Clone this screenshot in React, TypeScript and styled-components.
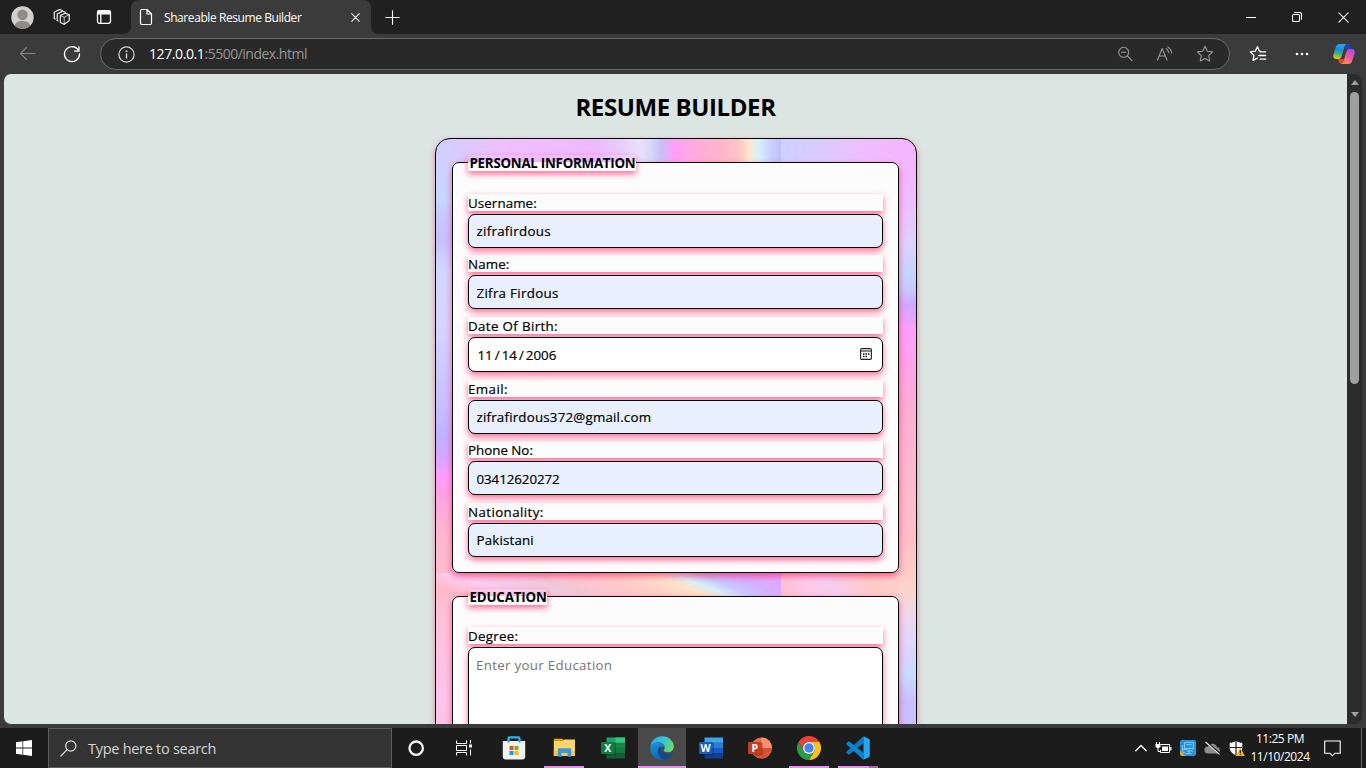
import React from "react";
import styled, { createGlobalStyle, css } from "styled-components";

const GlobalStyle = createGlobalStyle`
  * { box-sizing: border-box; }
  body { margin: 0; overflow: hidden; background: #3b3b3b; }
  svg { display: block; flex: none; }
`;

const ui = `"Open Sans", "Noto Sans", sans-serif`;
const formFont = `"Open Sans", "Noto Sans", sans-serif`;

const Screen = styled.div`
  width: 1366px;
  height: 768px;
  display: flex;
  flex-direction: column;
  overflow: hidden;
  background: #3b3b3b;
  font-family: ${ui};
`;

/* ---------- browser chrome ---------- */

const TabBar = styled.header`
  height: 34px;
  flex: none;
  display: flex;
  background: #202020;
`;

const TabTools = styled.div`
  width: 131px;
  display: flex;
  align-items: center;
  padding-left: 10.5px;
  gap: 19.5px;
  svg:last-child {
    margin-left: 5px;
  }
`;

const Tab = styled.div`
  width: 240px;
  height: 34px;
  background: #3b3b3b;
  border-radius: 8px 8px 0 0;
  display: flex;
  align-items: center;
  padding: 0 11px 0 8px;
  color: #fff;
`;

const TabFoot = styled.div<{ $side: "left" | "right" }>`
  width: 7px;
  height: 7px;
  align-self: flex-end;
  background: radial-gradient(
    circle at ${(p) => (p.$side === "left" ? "0 0" : "100% 0")},
    #202020 6.5px,
    #3b3b3b 7.2px
  );
  ${(p) => (p.$side === "left" ? "margin-left: -7px;" : "")}
`;

const TabTitle = styled.span`
  flex: 1;
  margin-left: 11px;
  font-size: 12px;
  letter-spacing: -0.42px;
  white-space: nowrap;
`;

const NewTab = styled.div`
  display: flex;
  align-items: center;
  padding-left: 7px;
`;

const WindowButtons = styled.div`
  margin-left: auto;
  display: flex;
`;

const WindowButton = styled.div`
  width: 46px;
  height: 34px;
  display: flex;
  align-items: center;
  justify-content: center;
`;

const Toolbar = styled.nav`
  height: 40px;
  flex: none;
  display: flex;
  align-items: center;
  background: #3b3b3b;
`;

const NavButtons = styled.div`
  width: 100px;
  display: flex;
  align-items: center;
  padding-left: 19px;
  gap: 27px;
`;

const AddressBar = styled.div`
  width: 1130px;
  height: 32px;
  border: 1px solid #696969;
  border-radius: 16px;
  background: #292929;
  display: flex;
  align-items: center;
  padding: 0 15px 0 16.5px;
`;

const Url = styled.span`
  flex: 1;
  margin-left: 14.5px;
  margin-top: -1px;
  font-size: 14px;
  letter-spacing: -0.5px;
  color: #969696;
  b {
    font-weight: 400;
    letter-spacing: -0.4px;
    color: #fff;
  }
`;

const AddressActions = styled.div`
  display: flex;
  align-items: center;
  gap: 23px;
`;

const ToolbarActions = styled.div`
  flex: 1;
  display: flex;
  align-items: center;
  padding-left: 19px;
  gap: 27px;
  svg:last-child {
    margin-left: -4px;
  }
`;

/* ---------- page ---------- */

const Viewport = styled.main`
  height: 650px;
  margin: 0 4px 4px;
  flex: none;
  display: flex;
  border-radius: 7px;
  overflow: hidden;
`;

const Page = styled.div`
  width: 1343px;
  background: #dbe5e1;
  display: flex;
  flex-direction: column;
  align-items: center;
  overflow: hidden;
`;

const Title = styled.h1`
  margin: 15px 0;
  height: 34px;
  line-height: 35px;
  font-family: ${ui};
  font-size: 24px;
  font-weight: 700;
  letter-spacing: -0.4px;
  color: #000;
`;

const glow = "0 3px 6px rgba(255, 10, 85, 0.6)";

const Form = styled.form`
  width: 482px;
  height: 700px;
  flex: none;
  padding: 15.5px 16px 16px;
  border: 1px solid #000;
  border-radius: 15px;
  box-shadow: 0 3px 6px rgba(230, 50, 120, 0.5);
  background:
    linear-gradient(90deg, #d0d0ff 0, #ddc8fc 34px, #f0bfff 66px, #eebafe 160px, #e8cdf8 184px,
      #eae0fd 205px, #d4daf8 214px, #c8c0f5 225px, #ff9ff8 238px, #ffaae0 256px, #ffb4cc 284px,
      #ffc4c4 302px, #ffe6cc 313px, #d5f0fc 323px, #c8d0ff 335px, #c0c0fc 345px, #cdd0ff 345px,
      #d8ccfc 384px, #f0bdff 430px, #f3b5ff 480px) 0 0 / 480px 24px no-repeat,
    linear-gradient(22deg, #ffb8cc 7%, #ffc4dc 12%, #fbcdf0 18%, #f0c8d8 38%, #ffc6cc 48%,
      #ffd0c8 59%, #ffe2c6 67%, #d8f0f4 73%, #c8c8ff 79%, #d4b0ff 86%, #dfa8ff 93%)
      0 434px / 345px 24px no-repeat,
    linear-gradient(60deg, #fcbccc 0, #ffc8e8 22%, #f4cdf0 42%, #ffcac8 75%, #fdd0cc 100%)
      345px 434px / 118px 24px no-repeat,
    linear-gradient(180deg, #cfd0ff 24px, #c4d8ff 61px, #c8c8ff 76px, #c8bfff 101px, #d0d8ff 131px,
      #d4d4ff 191px, #c8c0ff 261px, #c0b0ff 301px, #d8a6ff 321px, #ff9dff 337px, #ffa0e8 352px,
      #ffb5d0 391px, #ffbccf 431px, #ffc0d8 481px, #fbc4ec 561px, #fcc4e4 586px) 0 0 / 240px 100% no-repeat,
    linear-gradient(180deg, #f3b5ff 24px, #ecc0ff 71px, #e0d0ff 101px, #c4d4ff 136px, #c8c8ff 151px,
      #d0a8ff 166px, #ff9ffc 191px, #ffa6e0 241px, #ffb0d0 281px, #ffb8d0 341px, #ffbfc8 401px,
      #ffccc8 431px, #fbd4cc 451px, #ecd8f0 481px, #dcd4ff 511px, #c8dcff 536px, #c8c0ff 561px,
      #ccc0ff 586px) 240px 0 / 240px 100% no-repeat;
`;

const Group = styled.fieldset<{ $top: number }>`
  width: 447px;
  margin: 0 0 15.5px;
  padding: ${(p) => p.$top}px 15px 15px;
  border: 1px solid #000;
  border-radius: 7px;
  background: #fcfcfc;
  box-shadow: ${glow};
  display: block;
  min-width: 0;
`;

const Legend = styled.legend<{ $width: number; $spacing: number }>`
  width: ${(p) => p.$width}px;
  height: 16px;
  padding: 0 2px;
  line-height: 17px;
  font-family: ${formFont};
  font-size: 13.33px;
  font-weight: 700;
  letter-spacing: ${(p) => p.$spacing}px;
  white-space: nowrap;
  color: #000;
  box-shadow: ${glow};
`;

const Label = styled.label<{ $spacing: number }>`
  display: block;
  height: 17px;
  margin-bottom: 3px;
  padding-left: 0.5px;
  line-height: 19px;
  font-family: ${formFont};
  font-size: 13.33px;
  letter-spacing: ${(p) => p.$spacing}px;
  -webkit-text-stroke: 0.2px #000;
  color: #000;
  box-shadow: ${glow};
`;

const control = css`
  width: 415px;
  border: 1px solid #000;
  border-radius: 7px;
  font-family: ${formFont};
  font-size: 13.33px;
  color: #000;
  box-shadow: ${glow};
`;

const Input = styled.input<{ $gap: number; $spacing: number; $drop: number }>`
  ${control}
  display: block;
  height: 34px;
  margin: 0 0 ${(p) => p.$gap}px;
  padding: ${(p) => 1 + p.$drop}px 7.5px 1px 8px;
  letter-spacing: ${(p) => p.$spacing}px;
  -webkit-text-stroke: 0.2px #000;
  background: #e8f0fe;
  outline: none;
`;

const DateField = styled.div`
  ${control}
  height: 35px;
  margin-bottom: 8px;
  padding: 1px 10px 1px 9px;
  display: flex;
  align-items: center;
  -webkit-text-stroke: 0.2px #000;
  background: #fff;
  svg {
    margin: -1px 0 0 auto;
  }
  i {
    font-style: normal;
    padding: 0 2px 0 2px;
  }
`;

const TextArea = styled.textarea`
  ${control}
  display: block;
  height: 87px;
  padding: 8px 7.5px;
  line-height: 18px;
  letter-spacing: 0.3px;
  background: #fff;
  outline: none;
  resize: vertical;
  &::placeholder {
    color: #757575;
  }
`;

const Scrollbar = styled.div`
  width: 15px;
  background: #2c2c2c;
  display: flex;
  flex-direction: column;
  align-items: center;
`;

const Thumb = styled.div`
  width: 9px;
  height: 292px;
  margin: 7px 0 auto;
  border-radius: 5px;
  background: #9f9f9f;
`;

const Arrow = styled.div<{ $down?: boolean }>`
  width: 0;
  height: 0;
  border: 4.5px solid transparent;
  ${(p) =>
    p.$down
      ? "border-top: 5px solid #9f9f9f; border-bottom: 0; margin-bottom: 7px;"
      : "border-bottom: 5px solid #9f9f9f; border-top: 0; margin-top: 6px;"}
`;

/* ---------- taskbar ---------- */

const Taskbar = styled.footer`
  height: 40px;
  flex: none;
  display: flex;
  background: #1c1c1c;
  color: #fff;
`;

const StartButton = styled.div`
  width: 48px;
  display: flex;
  align-items: center;
  justify-content: center;
`;

const SearchBox = styled.div`
  width: 344px;
  height: 40px;
  border: 1px solid #5e5e5e;
  background: #333;
  display: flex;
  align-items: center;
  padding-left: 11px;
  gap: 11px;
  font-size: 14.5px;
  letter-spacing: -0.28px;
  color: #d6d6d6;
`;

const AppButton = styled.div<{ $active?: boolean; $gap?: number }>`
  width: 48px;
  height: 40px;
  margin-left: ${(p) => p.$gap ?? 1}px;
  display: flex;
  flex-direction: column;
  align-items: center;
  justify-content: center;
  background: ${(p) => (p.$active ? "#4a4a4a" : "transparent")};
  position: relative;
`;

const Running = styled.span<{ $full?: boolean; $stacked?: boolean }>`
  position: absolute;
  bottom: 0;
  left: ${(p) => (p.$full ? 0 : 4)}px;
  right: ${(p) => (p.$full ? 0 : 4)}px;
  height: 2px;
  background: ${(p) =>
    p.$stacked ? "linear-gradient(90deg, #e88bf6 31px, #a766b0 31px)" : "#e88bf6"};
`;

const Tray = styled.div`
  margin-left: auto;
  display: flex;
  align-items: center;
  height: 40px;
`;

const TrayIcons = styled.div`
  display: flex;
  align-items: center;
  gap: 8px;
  margin-right: 5px;
`;

const Clock = styled.div`
  width: 60px;
  margin-right: 14px;
  font-size: 12px;
  line-height: 18px;
  letter-spacing: -0.45px;
  text-align: center;
  white-space: nowrap;
`;

const ShowDesktop = styled.div`
  width: 5px;
  height: 40px;
  margin-left: 20px;
  border-left: 1px solid #6a6a6a;
`;

/* ---------- icons ---------- */

const line = { fill: "none", stroke: "#fff", strokeWidth: 1.1, strokeLinecap: "round", strokeLinejoin: "round" } as const;

const Avatar = () => (
  <svg width="23" height="23" viewBox="0 0 23 23">
    <defs><clipPath id="face"><circle cx="11.5" cy="11.5" r="11.2" /></clipPath></defs>
    <g clipPath="url(#face)">
      <rect width="23" height="23" fill="#d2d0ce" />
      <circle cx="11.5" cy="8.7" r="5.2" fill="#8f8b88" />
      <ellipse cx="11.5" cy="20" rx="7.7" ry="5.2" fill="#8f8b88" />
    </g>
  </svg>
);

const Workspaces = () => (
  <svg width="18" height="18" viewBox="0 0 18 18" {...line}>
    <path d="M7.300 7.600L12.200 5.200l4 1.500v6.100L11.200 16.300l-3.900-1.800z" />
    <path d="M7.300 7.600l3.900 1.700 5-2.600M11.200 9.300v7" strokeWidth=".7" />
    <path d="M5 13l-.8-.4V6L9.500 3.300l3 1" />
    <path d="M2.200 11l-1-.4V4.300L6.500 1.500l3 1" />
  </svg>
);

const TabActions = () => (
  <svg width="16" height="16" viewBox="0 0 16 16" {...line} strokeWidth={1.3}>
    <rect x="1.500" y="1.700" width="13" height="12.600" rx="2" />
    <path d="M2 2.200h12v2.600H2z" fill="#fff" /><path d="M4.800 5v9" />
  </svg>
);

const Doc = () => (
  <svg width="14" height="18" viewBox="0 0 14 18" {...line} strokeWidth={1.2}>
    <path d="M2.500 1.500h5.500l4.500 4.500v9a1.500 1.500 0 0 1-1.500 1.500H2.500A1.500 1.500 0 0 1 1.500 15V3a1.500 1.500 0 0 1 1-1.500zM8 1.500V6h4.500" />
  </svg>
);

const Cross = ({ size, weight = 1.2 }: { size: number; weight?: number }) => (
  <svg width={size} height={size} viewBox="0 0 10 10" {...line} strokeWidth={weight}>
    <path d="M.8.8l8.400 8.400M9.200.8L.8 9.200" />
  </svg>
);

const Plus = () => (
  <svg width="15" height="15" viewBox="0 0 15 15" {...line}><path d="M7.500.8v13.400M.8 7.500h13.400" /></svg>
);

const Minimize = () => <svg width="10" height="10" viewBox="0 0 10 10"><path d="M0 5.500h10" stroke="#fff" /></svg>;

const Restore = () => (
  <svg width="10" height="10" viewBox="0 0 10 10" {...line}>
    <rect x=".5" y="2.500" width="7" height="7" rx="1.200" />
    <path d="M2.700.5h5A1.800 1.800 0 0 1 9.500 2.300v5" />
  </svg>
);

const Back = () => (
  <svg width="17" height="16" viewBox="0 0 17 16" {...line} stroke="#858585"><path d="M16 7.500H1.500M7.500 1.500L1.500 7.500l6 6" /></svg>
);

const Refresh = () => (
  <svg width="18" height="18" viewBox="0 0 18 18" {...line} strokeWidth={1.300}>
    <path d="M15.800 6A7.500 7.500 0 1 0 16.500 9M16 1.800V6.200H11.600" />
  </svg>
);

const Info = () => (
  <svg width="17" height="17" viewBox="0 0 17 17" {...line} stroke="#d8d8d8" strokeWidth={1.200}>
    <circle cx="8.500" cy="8.500" r="7.600" /><path d="M8.500 8v4" strokeWidth="1.400" /><circle cx="8.500" cy="5.300" r=".4" />
  </svg>
);

const ZoomOut = () => (
  <svg width="16" height="16" viewBox="0 0 16 16" {...line} stroke="#9a9a9a">
    <circle cx="6.700" cy="6.300" r="5" /><path d="M10.500 10l4.500 4.700M4.500 6.300h4.500" />
  </svg>
);

const ReadAloud = () => (
  <svg width="17" height="16" viewBox="0 0 17 16" {...line} stroke="#9a9a9a">
    <path d="M1.500 14L6.200 2.500 11 14M3.200 10h6.100" />
    <path d="M10.300 2.600a5 5 0 0 1 2.200 3.900M11.800.9a8 8 0 0 1 3.800 6" />
  </svg>
);

const starPath = "M9 1.300l2.300 4.900 5.300.7-3.900 3.700 1 5.400L9 13.400 4.300 16l1-5.400L1.400 6.900l5.300-.7z";
const Star = () => (
  <svg width="18" height="18" viewBox="0 0 18 18" {...line} stroke="#9a9a9a"><path d={starPath} /></svg>
);

const Favorites = () => (
  <svg width="18" height="18" viewBox="0 0 18 18" {...line} strokeWidth={1.300}>
    <path d="M11.700 6.300l-1.400-.2L8.500 1.700 6.200 6.200l-4.900.7 3.600 3.500-.8 5 4.200-2.300M11.200 6.800h5.500M9.800 10.500h6.900M11.200 14.200h5.500" />
  </svg>
);

const Dots = () => (
  <svg width="16" height="16" viewBox="0 0 16 16" fill="#fff">
    <circle cx="3" cy="8" r="1.300" /><circle cx="8" cy="8" r="1.300" /><circle cx="13" cy="8" r="1.300" />
  </svg>
);

const Copilot = () => (
  <svg width="22" height="22" viewBox="0 0 22 22">
    <defs>
      <linearGradient id="cpA" x1=".5" y1="0" x2=".3" y2="1">
        <stop offset="0" stopColor="#1ea8f5" /><stop offset=".4" stopColor="#1b8edb" />
        <stop offset=".72" stopColor="#59b95b" /><stop offset="1" stopColor="#f5c50a" />
      </linearGradient>
      <linearGradient id="cpB" x1=".7" y1="0" x2=".3" y2="1">
        <stop offset="0" stopColor="#a74cf0" /><stop offset=".5" stopColor="#f0569b" /><stop offset="1" stopColor="#ff8b58" />
      </linearGradient>
    </defs>
    <path d="M12 1h3c1.500 0 2 1.300 2.400 2.600L18.300 6H13z" fill="#1746c8" />
    <path d="M5 16h6l-1 4.800H8.500C6.500 20.800 6 19.500 5 16z" fill="#e9452e" />
    <path d="M6.500 1H14c-1.500 0-2.300 1.600-2.800 3.400L8.900 12.500C8.300 14.700 7.600 16 5.600 16H3.200C.6 16-.1 14 .5 11.500L2.800 4C3.400 2 4.500 1 6.500 1z" fill="url(#cpA)" />
    <path d="M15.500 21H8c1.500 0 2.300-1.600 2.800-3.400l2.300-8.100C13.700 7.300 14.400 6 16.400 6h2.400c2.600 0 3.300 2 2.700 4.500L19.200 18c-.6 2-1.700 3-3.700 3z" fill="url(#cpB)" />
  </svg>
);

const Calendar = () => (
  <svg width="12" height="12" viewBox="0 0 12 12">
    <rect x=".6" y=".6" width="10.800" height="10.800" rx="1.200" fill="none" stroke="#222" strokeWidth="1.100" />
    <path d="M1 3h10" stroke="#555" strokeWidth="1.400" />
    <path d="M3 6h1.500M5.500 6H7M8 6h1.500M3 8.500h1.500M5.500 8.500H7" stroke="#111" strokeWidth="1.300" />
  </svg>
);

const WindowsLogo = () => (
  <svg width="16" height="16" viewBox="0 0 16 16" fill="#fff">
    <path d="M0 2.200l6.500-.9v6.300H0zM7.200 1.200L16 0v7.600H7.200zM0 8.400h6.500v6.300L0 13.800zM7.200 8.400H16V16l-8.800-1.200z" />
  </svg>
);

const SearchGlyph = () => (
  <svg width="17" height="17" viewBox="0 0 17 17" {...line} stroke="#e0e0e0" strokeWidth={1.200}>
    <circle cx="10.800" cy="6" r="5.100" /><path d="M7.100 9.700L.9 16" />
  </svg>
);

const Cortana = () => (
  <svg width="17" height="17" viewBox="0 0 17 17"><circle cx="8.200" cy="8.200" r="6.700" fill="none" stroke="#f5f5f5" strokeWidth="2.300" /></svg>
);

const TaskView = () => (
  <svg width="16" height="16" viewBox="0 0 16 16" fill="none" stroke="#fff">
    <path d="M.5.5V3.500h10V.5M.5 15.500V12.500h10v3M.5 5.500h10v5H.5zM14.500 0v3.500M14.500 9.500V15.500" />
    <path d="M13 4.500h3v3h-3z" fill="#fff" stroke="none" />
  </svg>
);

const Store = () => (
  <svg width="24" height="24" viewBox="0 0 24 24">
    <path d="M6.500 6V2.500c0-.8.500-1.200 1.200-1.200h8.600c.7 0 1.200.4 1.200 1.200V6" fill="none" stroke="#35b5ee" strokeWidth="2.200" />
    <path d="M.8 5h22.400v15.500a3 3 0 0 1-3 3H3.800a3 3 0 0 1-3-3z" fill="#f1f1f1" />
    <path d="M6.500 3.500v3M17.500 3.500v3" stroke="#2a9fd6" strokeWidth="2" />
    <path d="M7.500 10h4v4h-4z" fill="#f25022" /><path d="M12.500 10h4v4h-4z" fill="#7fba00" />
    <path d="M7.500 15h4v4h-4z" fill="#00a4ef" /><path d="M12.500 15h4v4h-4z" fill="#ffb900" />
  </svg>
);

const Explorer = () => (
  <svg width="23" height="20" viewBox="0 0 23 20">
    <path d="M.8 2c0-.8.500-1.300 1.200-1.300h7.500l2 2H.8z" fill="#e9a50c" />
    <path d="M.8 2.800H10l1.500-1.300H22V18H.8z" fill="#ffd666" /><path d="M.8 13H22v5H.8z" fill="#f6c84d" />
    <path d="M4.800 18.800v-7.300c0-.8.500-1.200 1.200-1.200h11c.8 0 1.200.4 1.200 1.200v7.300h-3.700v-3.800H8.500v3.800z" fill="#3e97dc" />
  </svg>
);

type OfficeProps = { letter: string; tone: string; shades: string[]; round?: boolean };
const OfficeText = styled.text`
  font: 700 10.500px ${ui};
  fill: #fff;
  text-anchor: middle;
`;
const Office = ({ letter, tone, shades, round }: OfficeProps) => (
  <svg width="24" height="22" viewBox="0 0 24 22">
    {round ? (
      <>
        <circle cx="13.500" cy="11" r="10.500" fill={shades[0]} />
        <path d="M13.500.5A10.500 10.500 0 0 1 24 11H13.500z" fill={shades[1]} />
        <path d="M3 11h21a10.500 10.500 0 0 1-21 0z" fill={shades[2]} />
      </>
    ) : (
      <>
        {shades.slice(0, 4).map((c, i) => (
          <rect key={c} x="5.500" y={0.5 + i * 5.2} width="18.500" height="5.400" fill={c} />
        ))}
        {shades[4] && <path d="M14.500.5H24v5.200h-9.500z" fill={shades[4]} />}
      </>
    )}
    <rect x="6" y="6" width="9" height="12.500" fill="#000" opacity=".2" />
    <rect x="0" y="5" width="13.500" height="12" rx="1" fill={tone} />
    <OfficeText x="6.700" y="14.800">{letter}</OfficeText>
  </svg>
);

const Edge = () => (
  <svg width="24" height="24" viewBox="0 0 24 24">
    <defs>
      <linearGradient id="edA" x1="0" y1=".4" x2="1" y2=".6">
        <stop offset="0" stopColor="#2aaee6" /><stop offset=".5" stopColor="#35c3d8" /><stop offset="1" stopColor="#6be05c" />
      </linearGradient>
      <linearGradient id="edB" x1="0" y1="0" x2=".5" y2="1">
        <stop offset="0" stopColor="#1898dc" /><stop offset="1" stopColor="#0b64b8" />
      </linearGradient>
    </defs>
    <path d="M.4 10C1.500 4 6.300.2 12 .2c7 0 11.800 5 11.800 10.100 0 3.900-2.800 6-5.800 6-2.700 0-4.300-.9-4.300-1.700 0-.7 1-1.200 1-3.100C14.700 8.500 12 6.500 8.500 6.500 4.500 6.500 1.500 8.500.4 10z" fill="url(#edA)" />
    <path d="M.2 12.500C.3 8.500 4 6.400 8.300 6.400c3.600 0 6 2 6.300 4.700-4-2-6.600 1-6.600 4.200 0 4.400 3.200 7.800 6.800 8.200-1 .3-1.800.4-2.800.4C5.200 23.900.2 18.800.2 12.500z" fill="url(#edB)" />
    <path d="M8 15.300c0-2.600 1.300-4.300 3-5-.8 1.400-.4 7.800 6.800 7.800 2.300 0 3.700-.6 4.700-1.200.4-.2.700.2.500.5-1.500 2.900-4.600 6-8.200 6.100-3.600-.4-6.800-3.800-6.800-8.200z" fill="#0e4a8c" />
  </svg>
);

const Chrome = () => (
  <svg width="24" height="24" viewBox="0 0 24 24">
    <path d="M1.600 6A12 12 0 0 1 22.400 6H12a6 6 0 0 0-5.200 9z" fill="#ea4335" />
    <path d="M22.400 6A12 12 0 0 1 12 24l5.200-9A6 6 0 0 0 12 6z" fill="#fbc116" />
    <path d="M12 24A12 12 0 0 1 1.600 6l5.200 9a6 6 0 0 0 10.400 0z" fill="#2a9b48" />
    <circle cx="12" cy="12" r="6" fill="#fff" /><circle cx="12" cy="12" r="4.700" fill="#4285f4" />
  </svg>
);

const VSCode = () => (
  <svg width="24" height="24" viewBox="0 0 24 24">
    <path d="M17.500.3L.6 15.600c-.5.500-.5 1 0 1.500l1.300 1.200c.4.400 1 .4 1.400.1L17.500 7.200z" fill="#0f78bf" />
    <path d="M17.500 23.700L.6 8.400c-.5-.5-.5-1 0-1.500l1.300-1.200c.4-.4 1-.4 1.400-.1l14.200 11.200z" fill="#0b85cf" />
    <path d="M17.500.2l5.300 2.500c.7.300 1 .9 1 1.500v15.600c0 .7-.3 1.200-1 1.500l-5.300 2.500z" fill="#27a5ef" />
  </svg>
);

const Chevron = () => (
  <svg width="12" height="8" viewBox="0 0 12 8" {...line} strokeWidth={1.300}><path d="M.8 6.700L6 1.500l5.200 5.200" /></svg>
);

const Battery = () => (
  <svg width="17" height="12" viewBox="0 0 17 12" fill="none" stroke="#fff">
    <path d="M5.500 2.500h9v8h-9V8" /><path d="M15.800 5v3.500" strokeWidth="1.300" /><path d="M7 4.500h6v4.500H7z" fill="#fff" stroke="none" />
    <path d="M1.500 0v2M4.500 0v2M3 6v3.500h2.500" /><path d="M.5 2h5v2.500L4 6H2L.5 4.500z" fill="#fff" stroke="none" />
  </svg>
);

const GraphicsTray = () => (
  <svg width="16" height="16" viewBox="0 0 16 16">
    <rect width="16" height="16" rx="2" fill="#2a93da" />
    <path d="M4.500 2.500h9v6h-9zM6.500 4.500h5M2.500 5v7l3 1.500h6M7 11h6M9 8.500V13M2 9.500h5" fill="none" stroke="#8fd2fa" strokeWidth=".8" />
    <path d="M0 10.500L5.500 16H2a2 2 0 0 1-2-2z" fill="#e0a52e" />
  </svg>
);

const CloudOff = () => (
  <svg width="17" height="14" viewBox="0 0 17 14">
    <path d="M4 12.500a3.500 3.500 0 0 1-.2-7A5 5 0 0 1 13 6.200a3.200 3.200 0 0 1 .5 6.300z" fill="#8d8d8d" />
    <path d="M1.500 .3l14.500 12.500" stroke="#1c1c1c" strokeWidth="2" /><path d="M1.500 1l14 12.300" stroke="#eee" strokeWidth="1.100" />
  </svg>
);

const Shield = () => (
  <svg width="16" height="17" viewBox="0 0 16 17">
    <path d="M7 .8c2 1.400 4 2 6.300 2v4.500c0 4-3 6.600-6.300 8.200C3.700 13.900.7 11.300.7 7.300V2.800C3 2.800 5 2.200 7 .8z" fill="#fff" />
    <path d="M7 1v14M1 7.500h12" stroke="#1c1c1c" strokeWidth="1.200" />
    <path d="M11.300 7.500l4.500 8.500H6.800z" fill="#f8b916" /><path d="M11.300 10.300v3M11.300 14v1.100" stroke="#1c1c1c" strokeWidth="1.200" />
  </svg>
);

const Notification = () => (
  <svg width="17" height="17" viewBox="0 0 17 17" fill="none" stroke="#fff" strokeWidth="1.100">
    <path d="M.7 1h15.500v12.200h-5.300L8.400 15.800 6 13.200H.7z" />
  </svg>
);

/* ---------- data ---------- */

const fields = {
  username: { label: "Username:", value: "zifrafirdous", gap: 7, labelSpacing: 0.1, spacing: 0.28, drop: 0 },
  name: { label: "Name:", value: "Zifra Firdous", gap: 8, labelSpacing: 0.15, spacing: 0.3, drop: 2 },
  email: { label: "Email:", value: "zifrafirdous372@gmail.com", gap: 7, labelSpacing: 0.42, spacing: 0.2, drop: 0 },
  phone: { label: "Phone No:", value: "03412620272", gap: 8, labelSpacing: 0, spacing: -0.06, drop: 2 },
  nationality: { label: "Nationality:", value: "Pakistani", gap: 0, labelSpacing: 0.4, spacing: 0.17, drop: 0 },
};

const Field = ({ id }: { id: keyof typeof fields }) => {
  const f = fields[id];
  return (
    <>
      <Label htmlFor={id} $spacing={f.labelSpacing}>{f.label}</Label>
      <Input id={id} defaultValue={f.value} $gap={f.gap} $spacing={f.spacing} $drop={f.drop} />
    </>
  );
};

export default function App() {
  return (
    <Screen>
      <GlobalStyle />
      <TabBar>
        <TabTools><Avatar /><Workspaces /><TabActions /></TabTools>
        <TabFoot $side="left" />
        <Tab>
          <Doc />
          <TabTitle>Shareable Resume Builder</TabTitle>
          <Cross size={9} />
        </Tab>
        <TabFoot $side="right" />
        <NewTab><Plus /></NewTab>
        <WindowButtons>
          <WindowButton><Minimize /></WindowButton>
          <WindowButton><Restore /></WindowButton>
          <WindowButton><Cross size={11} weight={1} /></WindowButton>
        </WindowButtons>
      </TabBar>
      <Toolbar>
        <NavButtons><Back /><Refresh /></NavButtons>
        <AddressBar>
          <Info />
          <Url><b>127.0.0.1</b>:5500/index.html</Url>
          <AddressActions><ZoomOut /><ReadAloud /><Star /></AddressActions>
        </AddressBar>
        <ToolbarActions><Favorites /><Dots /><Copilot /></ToolbarActions>
      </Toolbar>

      <Viewport>
        <Page>
          <Title>RESUME BUILDER</Title>
          <Form>
            <Group $top={23.5}>
              <Legend $width={168} $spacing={-0.25}>PERSONAL INFORMATION</Legend>
              <Field id="username" />
              <Field id="name" />
              <Label $spacing={0.36}>Date Of Birth:</Label>
              <DateField>
                <span>11</span><i>/</i><span>14</span><i>/</i><span>2006</span>
                <Calendar />
              </DateField>
              <Field id="email" />
              <Field id="phone" />
              <Field id="nationality" />
            </Group>
            <Group $top={22.5}>
              <Legend $width={79} $spacing={-0.18}>EDUCATION</Legend>
              <Label htmlFor="degree" $spacing={0.28}>Degree:</Label>
              <TextArea id="degree" placeholder="Enter your Education" />
            </Group>
          </Form>
        </Page>
        <Scrollbar><Arrow /><Thumb /><Arrow $down /></Scrollbar>
      </Viewport>

      <Taskbar>
        <StartButton><WindowsLogo /></StartButton>
        <SearchBox><SearchGlyph />Type here to search</SearchBox>
        <AppButton $gap={0}><Cortana /></AppButton>
        <AppButton $gap={0}><TaskView /></AppButton>
        <AppButton $gap={2}><Store /></AppButton>
        <AppButton $gap={2}><Explorer /><Running /></AppButton>
        <AppButton><Office letter="X" tone="#107c41" shades={["#21a366", "#16864b", "#107c41", "#185c37", "#33c481"]} /></AppButton>
        <AppButton $active><Edge /><Running $full /></AppButton>
        <AppButton><Office letter="W" tone="#185abd" shades={["#41a5ee", "#2b7cd3", "#185abd", "#103f91"]} /></AppButton>
        <AppButton><Office letter="P" tone="#c43e1c" shades={["#ed6c47", "#ff8f6b", "#d35230"]} round /></AppButton>
        <AppButton><Chrome /><Running /></AppButton>
        <AppButton><VSCode /><Running $stacked /></AppButton>
        <Tray>
          <TrayIcons><Chevron /><Battery /><GraphicsTray /><CloudOff /><Shield /></TrayIcons>
          <Clock>11:25 PM<br />11/10/2024</Clock>
          <Notification />
          <ShowDesktop />
        </Tray>
      </Taskbar>
    </Screen>
  );
}
